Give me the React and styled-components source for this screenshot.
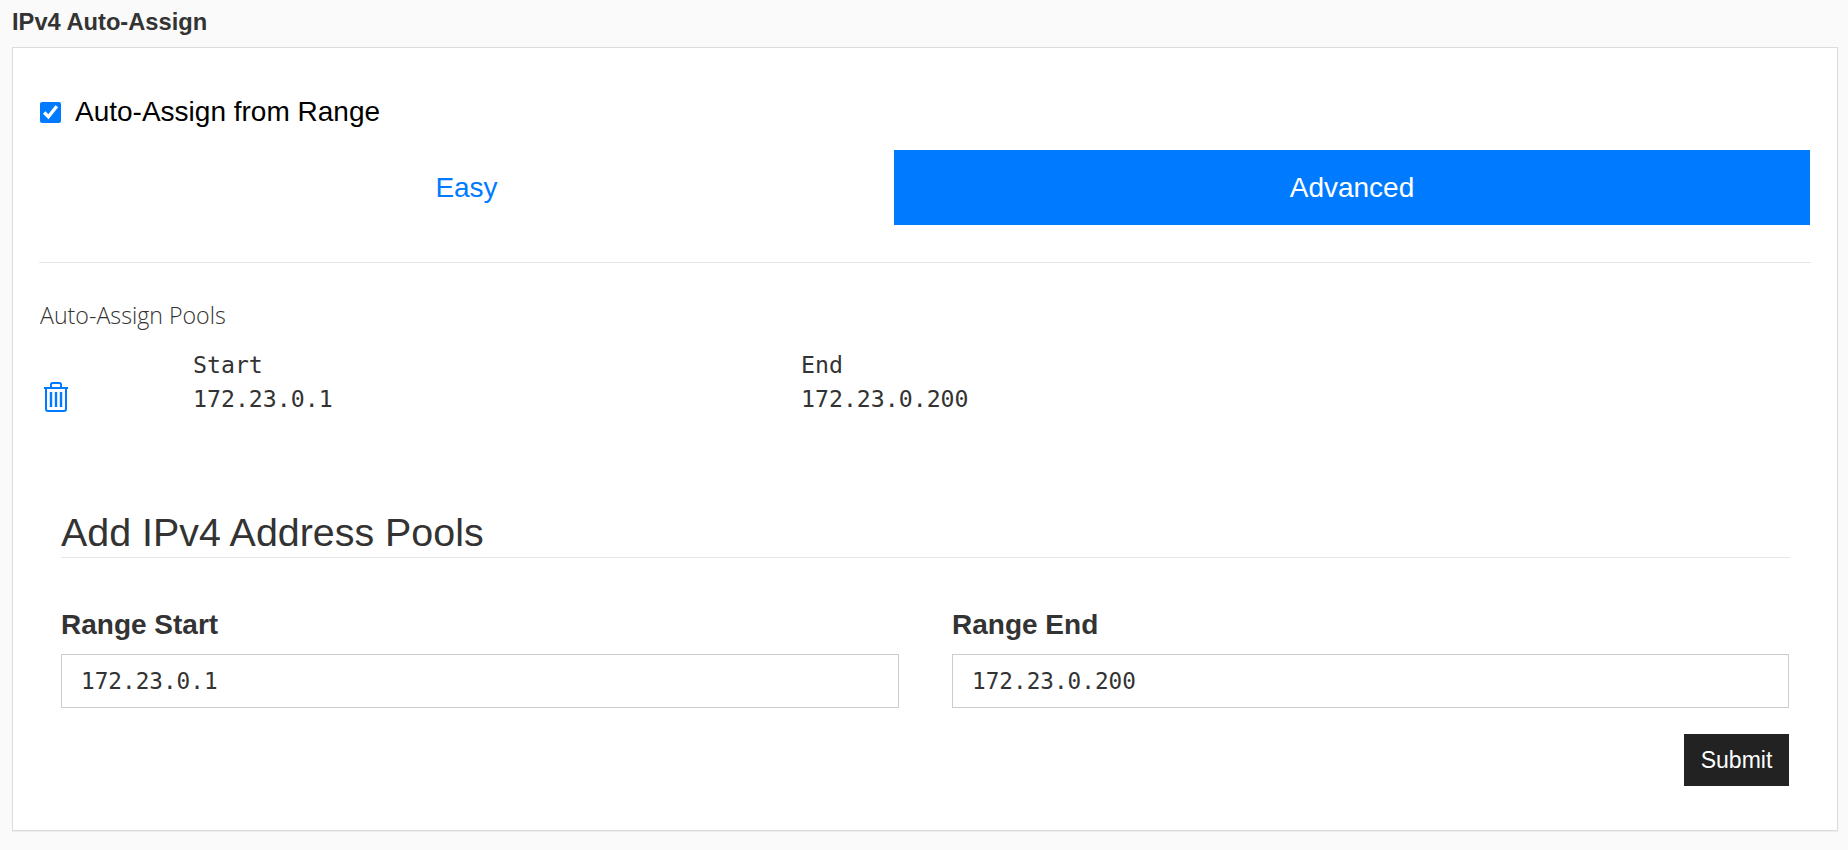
import React from "react";
import styled, { createGlobalStyle } from "styled-components";

const Global = createGlobalStyle`
  html, body { margin: 0; padding: 0; background: #fafafa; height: 850px; overflow: hidden; }
  body { font-family: "Liberation Sans", Arial, sans-serif; color: #333; }
`;
const Page = styled.div`padding: 10px 10px 0 12px;`;
const PanelTitle = styled.h3`
  margin: 0; font-size: 23.7px; line-height: 24px; height: 37px; font-weight: 700; color: #333;
`;
const Panel = styled.section`
  box-sizing: border-box; width: 1826px; height: 784px; background: #fff;
  border: 1px solid #dcdcdc; box-shadow: 0 1px 1px rgba(0,0,0,.05);
  padding: 48px 26px 0;
`;
const CheckRow = styled.label`
  display: flex; align-items: center; height: 32px; gap: 14px; font-size: 28px; color: #000;
`;
const Check = styled.input`
  appearance: auto; width: 21px; height: 21px; margin: 0 0 0 1px; accent-color: #007bff;
`;
const Tabs = styled.div`
  display: grid; grid-template-columns: 855px 916px; margin-top: 22px;
`;
const Tab = styled.div`
  height: 75px; display: flex; align-items: center; justify-content: center; font-size: 28px;
  color: ${p => (p.$active ? "#fff" : "#007bff")};
  background: ${p => (p.$active ? "#007bff" : "#fff")};
`;
const Rule = styled.hr`
  margin: 37px 0 0; border: 0; border-top: 1px solid #e6e6e6;
`;
const PoolsLabel = styled.div`
  margin: 38px 0 0 1px; font-family: "Open Sans", sans-serif; font-weight: 300; font-size: 23.2px; line-height: 28px; color: #333;
`;
const PoolRow = styled.div`
  display: grid; grid-template-columns: 154px 608px 1fr; margin-top: 19px; align-items: end;
`;
const TrashButton = styled.button`
  border: 0; background: none; padding: 0 0 0 4px; margin: 0 0 4px; color: #007bff; display: flex; width: 32px;
`;
const PoolCol = styled.div`
  font-family: "DejaVu Sans Mono", monospace; font-size: 23.2px; line-height: 34px; color: #333;
`;
const AddForm = styled.form`margin: 89px 21px 0 22px;`;
const AddTitle = styled.h2`
  margin: 0; font-size: 39.4px; font-weight: 400; line-height: 54px; height: 52px; color: #333; border-bottom: 1px solid #e6e6e6;
`;
const Fields = styled.div`
  display: grid; grid-template-columns: 838px 837px; column-gap: 53px; margin-top: 52px;
`;
const Field = styled.div`display: flex; flex-direction: column;`;
const FieldLabel = styled.label`font-size: 28px; font-weight: 700; line-height: 30px; color: #333; margin-bottom: 14px;`;
const TextInput = styled.input`
  box-sizing: border-box; width: 100%; height: 54px; padding: 0 19px; border: 1px solid #ccc; border-radius: 0; outline: 0;
  font-family: "DejaVu Sans Mono", monospace; font-size: 22.7px; color: #333; background: #fff;
`;
const Actions = styled.div`display: flex; justify-content: flex-end; margin-top: 26px; margin-right: 1px;`;
const Submit = styled.button`
  width: 105px; height: 52px; border: 0; border-radius: 0; background: #222; color: #fff;
  font-family: "Liberation Sans", Arial, sans-serif; font-size: 23px; padding: 0;
`;

const Trash = () => (
  <svg width="26" height="30" viewBox="0 0 26 30" fill="none" stroke="currentColor" strokeWidth="2">
    <path d="M1 6h24M8 6V2.500A1.500 1.500 0 0 1 9.500 1h7A1.500 1.500 0 0 1 18 2.500V6" />
    <path d="M3 6v21a2 2 0 0 0 2 2h16a2 2 0 0 0 2-2V6" />
    <path d="M8 10v15M13 10v15M18 10v15" strokeWidth="2.400" />
  </svg>
);

export default function App() {
  return (
    <Page>
      <Global />
      <PanelTitle>IPv4 Auto-Assign</PanelTitle>
      <Panel>
        <CheckRow>
          <Check type="checkbox" defaultChecked />
          Auto-Assign from Range
        </CheckRow>
        <Tabs>
          <Tab>Easy</Tab>
          <Tab $active>Advanced</Tab>
        </Tabs>
        <Rule />
        <PoolsLabel>Auto-Assign Pools</PoolsLabel>
        <PoolRow>
          <TrashButton type="button" aria-label="Delete"><Trash /></TrashButton>
          <PoolCol>Start<br />172.23.0.1</PoolCol>
          <PoolCol>End<br />172.23.0.200</PoolCol>
        </PoolRow>
        <AddForm>
          <AddTitle>Add IPv4 Address Pools</AddTitle>
          <Fields>
            <Field>
              <FieldLabel>Range Start</FieldLabel>
              <TextInput defaultValue="172.23.0.1" />
            </Field>
            <Field>
              <FieldLabel>Range End</FieldLabel>
              <TextInput defaultValue="172.23.0.200" />
            </Field>
          </Fields>
          <Actions><Submit type="button">Submit</Submit></Actions>
        </AddForm>
      </Panel>
    </Page>
  );
}
